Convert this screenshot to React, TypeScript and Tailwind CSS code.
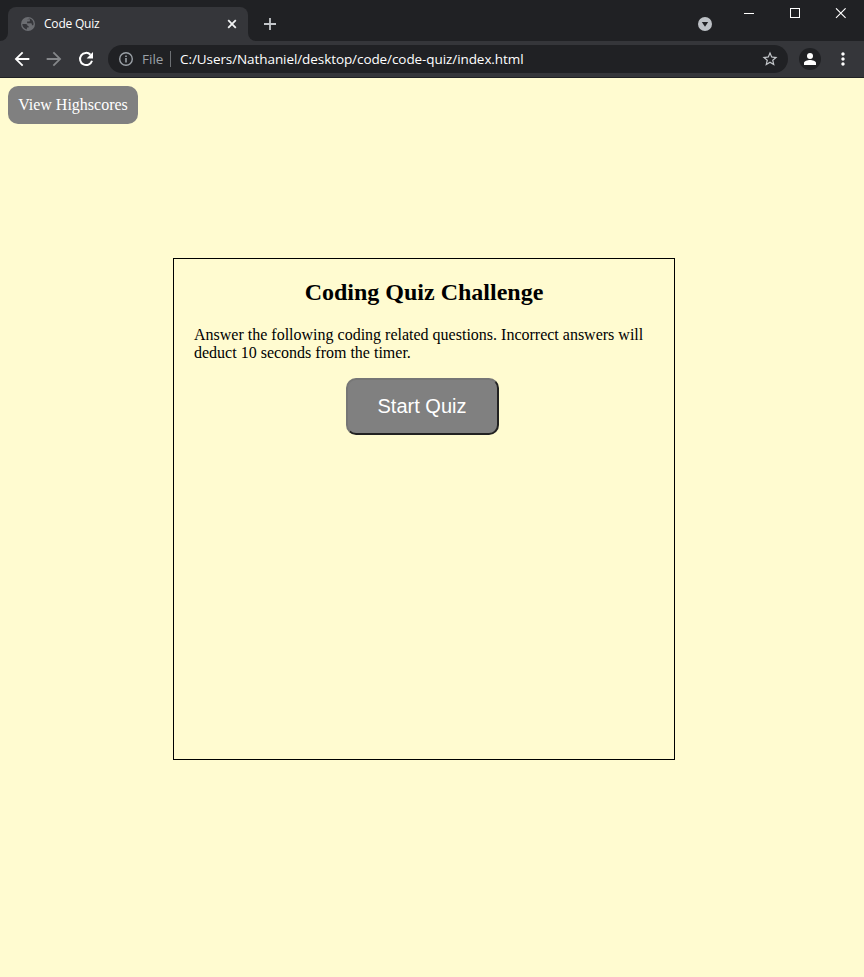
import React from "react";
import { MdArrowBack, MdArrowForward, MdMoreVert, MdStarBorder } from "react-icons/md";

function GlobeIcon() {
  return (
    <svg className="size-4" viewBox="0 0 16 16">
      <circle cx="8" cy="8" r="7" fill="#6b6d71" />
      <path
        d="M2.3 8.1h3.2c1.4 0 2.1.9 2.1 1.8h1v1.6H6.9v1.9c-2.6-.3-4.6-2.5-4.6-5.3zM7 3.2h2.9v1.2c0 .8-.6 1.2-1.4 1.2H7.1v1.6h3.4c.9 0 1.4.5 1.4 1.3v.8h1.3c.3-.7.4-1.3.3-2-.2-2.2-1.5-3.9-3.6-4.7z"
        fill="#35363a"
      />
    </svg>
  );
}

function TabStrip() {
  return (
    <div className="flex h-[41px] bg-[#202124]">
      <div className="w-2 bg-[#35363a]">
        <div className="h-full w-2 rounded-br-lg bg-[#202124]" />
      </div>
      <div className="bg-[#202124] pt-[7px]">
        <div className="flex h-[34px] w-60 items-center rounded-t-lg bg-[#35363a] pl-3 pr-[11px]">
          <GlobeIcon />
          <span className="ml-2 grow whitespace-nowrap text-[12px] leading-4 tracking-[-0.2px] text-white">
            Code Quiz
          </span>
          <svg className="size-[10px]" viewBox="0 0 10 10" fill="none" stroke="#f1f3f4" strokeWidth="1.8">
            <path d="M1.2 1.2l7.6 7.6M8.8 1.2L1.2 8.8" />
          </svg>
        </div>
      </div>
      <div className="w-2 bg-[#35363a]">
        <div className="h-full w-2 rounded-bl-lg bg-[#202124]" />
      </div>
      <svg className="ml-2 mt-[18px] size-3" viewBox="0 0 12 12" fill="none" stroke="#c4c7cb" strokeWidth="1.8">
        <path d="M6 0v12M0 6h12" />
      </svg>
      <div className="grow" />
      <svg className="mt-[17px] size-[14px]" viewBox="0 0 14 14">
        <circle cx="7" cy="7" r="7" fill="#bdc1c6" />
        <path d="M3.8 5h6.4L7 9.8z" fill="#202124" />
      </svg>
      <div className="ml-[31px] mr-[18px] flex gap-[35px] pt-2">
        <svg className="h-[11px] w-[11px]" viewBox="0 0 11 11" shapeRendering="crispEdges">
          <path d="M1 5h10v1H1z" fill="#fff" />
        </svg>
        <svg className="h-[11px] w-[11px]" viewBox="0 0 11 11" shapeRendering="crispEdges">
          <rect x="1.5" y="0.5" width="9" height="9" fill="none" stroke="#fff" />
        </svg>
        <svg className="h-[11px] w-[11px]" viewBox="0 0 11 11" fill="none" stroke="#fff" strokeWidth="1.1">
          <path d="M1 0.3l9.6 9.6M10.6 0.3L1 9.9" />
        </svg>
      </div>
    </div>
  );
}

function Toolbar() {
  return (
    <div className="flex h-[37px] items-center border-b border-[#202124] bg-[#35363a] pl-[11px] pr-[11px] text-white">
      <MdArrowBack className="size-[22px]" />
      <MdArrowForward className="ml-[10px] size-[22px] text-[#85878a]" />
      <svg className="ml-[13px] size-4" viewBox="0 0 16 16">
        <path d="M12.5 3.7A6.1 6.1 0 1 0 14 9.7" fill="none" stroke="#fff" strokeWidth="2" />
        <path d="M15 1v6.4H8.6z" fill="#fff" />
      </svg>
      <div className="ml-[14px] flex h-7 w-[680px] items-center rounded-full bg-[#202124] pl-[11px] pr-[9px] leading-5">
        <svg className="size-[14px]" viewBox="0 0 14 14" fill="none" stroke="#9aa0a6">
          <circle cx="7" cy="7" r="6.3" strokeWidth="1.4" />
          <path d="M7 6v4.5M7 3.5V5" strokeWidth="1.6" />
        </svg>
        <span className="ml-[9px] w-[28px] whitespace-nowrap text-[13.5px] text-[#9aa0a6]">File</span>
        <div className="h-4 w-px bg-[#6d7074]" />
        <span className="ml-[9px] grow whitespace-nowrap text-[13.5px] tracking-[-0.08px] text-white">
          C:/Users/Nathaniel/desktop/code/code-quiz/index.html
        </span>
        <MdStarBorder className="size-[18px] text-[#c4c7cb]" />
      </div>
      <div className="ml-[11px] flex size-[22px] items-center justify-center rounded-full bg-[#202124]">
        <svg className="size-3" viewBox="0 0 12 12" fill="#fff">
          <circle cx="6" cy="3" r="3" />
          <path d="M0 12v-2c0-2 3.5-3 6-3s6 1 6 3v2z" />
        </svg>
      </div>
      <div className="grow" />
      <MdMoreVert className="size-5" />
    </div>
  );
}

export default function App() {
  return (
    <div className="flex h-[977px] w-[864px] flex-col overflow-hidden bg-[#fffbd0] font-['Open_Sans','Noto_Sans',sans-serif]">
      <TabStrip />
      <Toolbar />
      <main className="flex flex-col items-start pt-2 font-['Liberation_Serif',serif] text-black">
        <a className="ml-2 flex h-[38px] w-[130px] items-center justify-center whitespace-nowrap rounded-[10px] bg-[#808080] text-[16px] leading-[18px] text-white">
          View Highscores
        </a>
        <section className="ml-[173px] mt-[134px] h-[502px] w-[502px] border border-black px-5 pt-5">
          <h2 className="text-center text-[24px] font-bold leading-[27px]">Coding Quiz Challenge</h2>
          <p className="mt-5 text-[16px] leading-[18px]">
            Answer the following coding related questions. Incorrect answers will
            <br />
            deduct 10 seconds from the timer.
          </p>
          <button className="ml-[152px] mt-4 block h-[57px] w-[153px] whitespace-nowrap rounded-[10px] border-2 border-t-[#767676] border-l-[#767676] border-r-[#212121] border-b-[#212121] bg-[#808080] pr-px font-['Liberation_Sans',sans-serif] text-[20px] leading-[23px] text-white">
            Start Quiz
          </button>
        </section>
      </main>
    </div>
  );
}
